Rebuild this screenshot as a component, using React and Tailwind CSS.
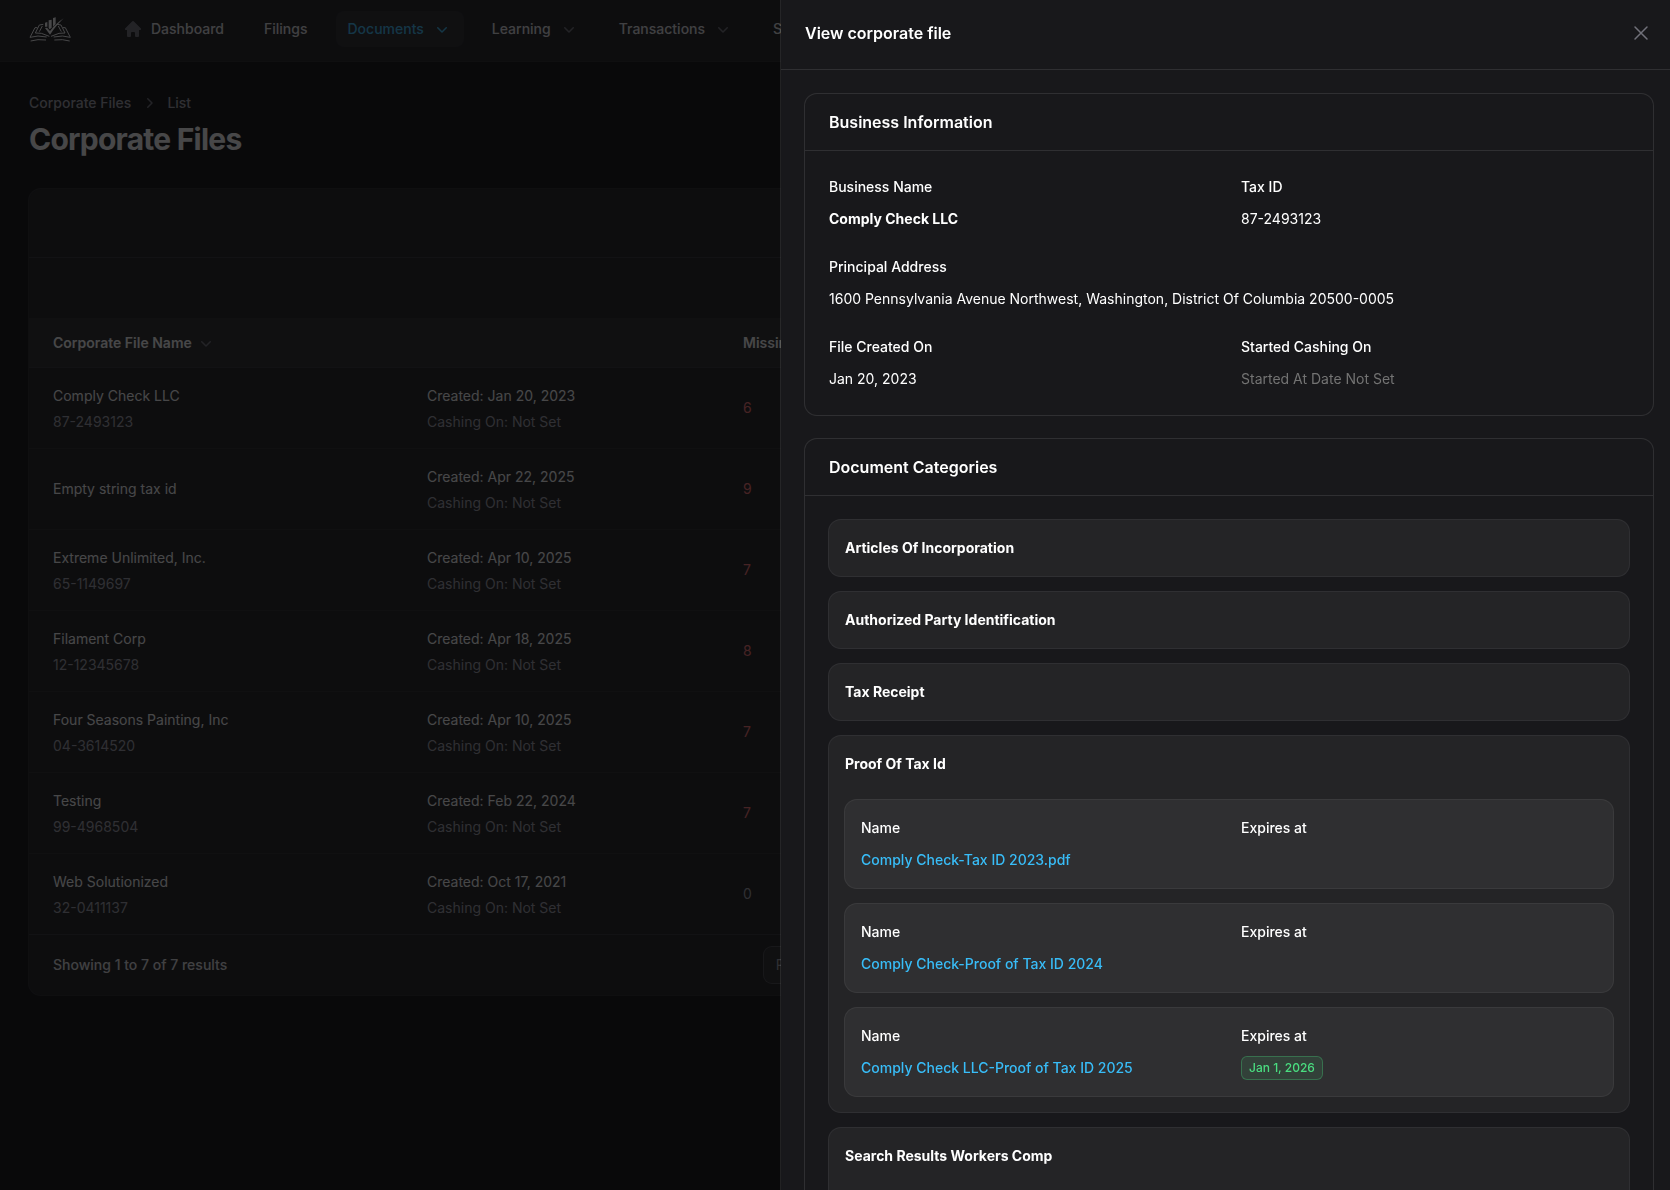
import {
  HiMiniChevronDown,
  HiMiniChevronRight,
  HiMiniHome,
  HiOutlineXMark,
} from "react-icons/hi2";

const navItems = [
  { label: "Dashboard", icon: true },
  { label: "Filings" },
  { label: "Documents", menu: true, active: true },
  { label: "Learning", menu: true },
  { label: "Transactions", menu: true },
  { label: "Settings", menu: true },
];

const files = [
  { name: "Comply Check LLC", taxId: "87-2493123", created: "Jan 20, 2023", missing: 6 },
  { name: "Empty string tax id", created: "Apr 22, 2025", missing: 9 },
  { name: "Extreme Unlimited, Inc.", taxId: "65-1149697", created: "Apr 10, 2025", missing: 7 },
  { name: "Filament Corp", taxId: "12-12345678", created: "Apr 18, 2025", missing: 8 },
  { name: "Four Seasons Painting, Inc", taxId: "04-3614520", created: "Apr 10, 2025", missing: 7 },
  { name: "Testing", taxId: "99-4968504", created: "Feb 22, 2024", missing: 7 },
  { name: "Web Solutionized", taxId: "32-0411137", created: "Oct 17, 2021", missing: 0 },
];

const categories = [
  { title: "Articles Of Incorporation" },
  { title: "Authorized Party Identification" },
  { title: "Tax Receipt" },
  {
    title: "Proof Of Tax Id",
    documents: [
      { name: "Comply Check-Tax ID 2023.pdf" },
      { name: "Comply Check-Proof of Tax ID 2024" },
      { name: "Comply Check LLC-Proof of Tax ID 2025", expires: "Jan 1, 2026" },
    ],
  },
  { title: "Search Results Workers Comp", documents: [] },
];

function Logo() {
  return (
    <svg viewBox="88 50 126 75" className="h-[25px] w-[42px] text-white" fill="none" stroke="currentColor" aria-hidden="true">
      <g fill="currentColor" stroke="none">
        <path d="M136 67l7-2v14h-7z" />
        <path d="M147 60l9-2v24l-6 5-3-4z" />
        <path d="M160 53l8-2v20l-8 8z" />
        <path d="M136 83l6-1 9 10c12-15 25-28 41-38-15 14-28 30-41 49z" />
      </g>
      <g strokeWidth="3">
        <path d="M131 72l-12 2-12 24 18 1 24 9" />
        <path d="M128 77l-9 17" />
        <path d="M113 82h-7l-15 29 24-4 26 3" />
        <path d="M93 122l22-4 24 1" />
        <path d="M172 72l12 2 12 24-18 1-24 9" />
        <path d="M176 77l9 17" />
        <path d="M190 82h7l15 29-24-4-26 3" />
        <path d="M210 122l-22-4-24 1" />
      </g>
    </svg>
  );
}

function TopBar() {
  return (
    <nav className="flex h-[61px] items-center gap-10 bg-[#18181b] px-[29px] pb-[3px] ring-1 ring-white/10">
      <a href="#" aria-label="Home">
        <Logo />
      </a>
      <ul className="flex items-center gap-4">
        {navItems.map((item) => (
          <li key={item.label}>
            <a
              href="#"
              className={`flex items-center gap-2 rounded-lg px-3 py-2 text-sm font-medium ${
                item.active ? "bg-white/5 text-[#38bdf8]" : "text-zinc-200"
              }`}
            >
              {item.icon && <HiMiniHome className="size-5 text-[#71717a]" />}
              {item.label}
              {item.menu && (
                <HiMiniChevronDown className={item.active ? "size-5 text-[#38bdf8]" : "size-5 text-[#71717a]"} />
              )}
            </a>
          </li>
        ))}
      </ul>
    </nav>
  );
}

function FilesTable() {
  return (
    <table className="w-full table-fixed text-left text-sm">
      <thead className="border-y border-white/5 bg-white/5 text-white">
        <tr>
          <th className="w-[386px] py-3.5 pr-3 pl-6 font-semibold">
            <button type="button" className="flex items-center gap-1">
              Corporate File Name
              <HiMiniChevronDown className="size-5 text-[#71717a]" />
            </button>
          </th>
          <th className="w-[316px] px-3 py-3.5" />
          <th className="px-3 py-3.5 font-semibold">Missing</th>
        </tr>
      </thead>
      <tbody className="divide-y divide-white/5">
        {files.map((file) => (
          <tr key={file.name}>
            <td className="py-4 pr-3 pl-6">
              <p className="leading-6 text-white">{file.name}</p>
              {file.taxId && <p className="mt-1 leading-5 text-[#a1a1aa]">{file.taxId}</p>}
            </td>
            <td className="px-3 py-4">
              <p className="leading-6 text-white">Created: {file.created}</p>
              <p className="mt-1 leading-5 text-[#a1a1aa]">Cashing On: Not Set</p>
            </td>
            <td className={`px-3 py-4 leading-6 ${file.missing ? "text-[#f87171]" : "text-[#a1a1aa]"}`}>
              {file.missing}
            </td>
          </tr>
        ))}
      </tbody>
    </table>
  );
}

function FilesPage() {
  return (
    <main className="px-[29px] py-8">
      <div className="flex items-center gap-2 text-sm font-medium text-[#a1a1aa]">
        <a href="#">Corporate Files</a>
        <HiMiniChevronRight className="size-5 text-[#71717a]" />
        <a href="#">List</a>
      </div>
      <h1 className="mt-2 text-3xl font-bold tracking-tight text-white">Corporate Files</h1>

      <div className="mt-8 overflow-hidden rounded-xl bg-[#18181b] ring-1 ring-white/10">
        <div className="h-[69px] border-b border-white/10" />
        <div className="h-[60px]" />
        <FilesTable />
        <div className="grid grid-cols-[1fr_auto_1fr] items-center border-t border-white/10 px-6 py-3">
          <span className="text-sm font-medium text-zinc-200">Showing 1 to 7 of 7 results</span>
          <label className="flex h-9 items-center rounded-lg bg-white/5 text-sm text-[#a1a1aa] ring-1 ring-white/20">
            <span className="border-r border-white/10 px-3">Per page</span>
            <select className="w-[58px] bg-transparent px-2 text-white" defaultValue="10">
              <option>10</option>
              <option>25</option>
            </select>
          </label>
        </div>
      </div>
    </main>
  );
}

function Entry({ label, wide, children }) {
  return (
    <div className={`flex flex-col gap-2 text-sm leading-6 ${wide ? "col-span-2" : ""}`}>
      <dt className="font-medium">{label}</dt>
      <dd className="min-h-6">{children}</dd>
    </div>
  );
}

function Section({ title, children }) {
  return (
    <section className="rounded-xl ring-1 ring-white/10">
      <h3 className="px-6 py-4 text-base leading-6 font-semibold">{title}</h3>
      <div className="border-t border-white/10 p-6">{children}</div>
    </section>
  );
}

function DocumentCard({ name, expires }) {
  return (
    <dl className="grid grid-cols-2 gap-6 rounded-xl bg-white/5 p-4 ring-1 ring-white/10">
      <Entry label="Name">
        <a href="#" className="font-medium text-[#38bdf8]">
          {name}
        </a>
      </Entry>
      <Entry label="Expires at">
        {expires && (
          <span className="flex w-fit rounded-md bg-[#4ade80]/10 px-2 py-1 text-xs font-medium text-[#4ade80] ring-1 ring-[#4ade80]/30 ring-inset">
            {expires}
          </span>
        )}
      </Entry>
    </dl>
  );
}

function Category({ title, documents }) {
  return (
    <div className="rounded-xl bg-white/5 ring-1 ring-white/10">
      <h4 className="p-4 text-sm leading-6 font-bold">{title}</h4>
      {documents && (
        <div className="flex min-h-28 flex-col gap-4 px-4 pt-2 pb-4">
          {documents.map((doc) => (
            <DocumentCard key={doc.name} {...doc} />
          ))}
        </div>
      )}
    </div>
  );
}

function FileDrawer() {
  return (
    <aside
      role="dialog"
      aria-labelledby="drawer-title"
      className="fixed inset-y-0 right-0 flex w-full max-w-[889px] flex-col bg-[#18181b] text-white ring-1 ring-white/10"
    >
      <header className="flex items-center justify-between border-b border-white/10 pt-[21px] pr-[17px] pb-6 pl-6">
        <h2 id="drawer-title" className="text-base leading-6 font-semibold">
          View corporate file
        </h2>
        <button type="button" aria-label="Close" className="text-[#71717a]">
          <HiOutlineXMark className="size-6" />
        </button>
      </header>

      <div className="flex flex-1 flex-col gap-6 overflow-y-auto py-6 pr-[17px] pl-6 [scrollbar-width:none]">
        <Section title="Business Information">
          <dl className="grid grid-cols-2 gap-6">
            <Entry label="Business Name">
              <strong className="font-bold">Comply Check LLC</strong>
            </Entry>
            <Entry label="Tax ID">87-2493123</Entry>
            <Entry label="Principal Address" wide>
              1600 Pennsylvania Avenue Northwest, Washington, District Of Columbia 20500-0005
            </Entry>
            <Entry label="File Created On">Jan 20, 2023</Entry>
            <Entry label="Started Cashing On">
              <span className="text-[#737373]">Started At Date Not Set</span>
            </Entry>
          </dl>
        </Section>

        <Section title="Document Categories">
          <div className="flex flex-col gap-4">
            {categories.map((category) => (
              <Category key={category.title} {...category} />
            ))}
          </div>
        </Section>
      </div>
    </aside>
  );
}

export default function App() {
  return (
    <div className="min-h-screen bg-[#09090b] font-[Inter,sans-serif] antialiased">
      <TopBar />
      <FilesPage />
      <div className="fixed inset-0 bg-[#09090b]/75" />
      <FileDrawer />
    </div>
  );
}
